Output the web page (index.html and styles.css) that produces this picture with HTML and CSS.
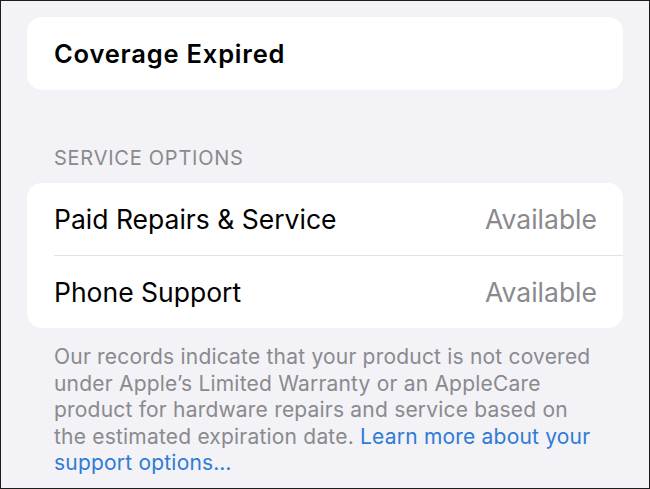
FILE: index.html
```html
<!DOCTYPE html>
<html>
<head>
<meta charset="utf-8">
<link rel="stylesheet" href="styles.css">
</head>
<body>
<div class="screen">
  <div class="card card-single">
    <div class="status">Coverage Expired</div>
  </div>
  <div class="section-header">SERVICE OPTIONS</div>
  <div class="card">
    <div class="row">
      <span class="label">Paid Repairs &amp; Service</span>
      <span class="value">Available</span>
    </div>
    <div class="row">
      <span class="label">Phone Support</span>
      <span class="value">Available</span>
    </div>
  </div>
  <p class="footer">Our records indicate that your product is not covered under Apple’s Limited Warranty or an AppleCare product for hardware repairs and service based on the estimated expiration date. <a class="link" href="#">Learn more about your support options…</a></p>
</div>
</body>
</html>
```
FILE: styles.css
```css
html, body {
  margin: 0;
  padding: 0;
}
body {
  width: 650px;
  height: 489px;
  overflow: hidden;
  font-family: Inter, "Liberation Sans", sans-serif;
}
.screen {
  box-sizing: border-box;
  width: 650px;
  height: 489px;
  background: #f2f2f7;
  border: 1px solid #1c1c1c;
  padding: 16px 26px 0 26px;
}
.card {
  background: #ffffff;
  border-radius: 15px;
}
.card-single {
  height: 73px;
  display: flex;
  align-items: center;
  padding-left: 27px;
}
.status {
  font-size: 25.5px;
  font-weight: 600;
  color: #000;
  letter-spacing: 0.8px;
}
.section-header {
  margin: 56px 0 0 27px;
  height: 37px;
  line-height: 24px;
  font-size: 20px;
  color: #8a8a8e;
  letter-spacing: 0.75px;
}
.row {
  height: 72px;
  margin-left: 27px;
  padding-right: 26px;
  display: flex;
  align-items: center;
  justify-content: space-between;
  font-size: 26.5px;
}
.row + .row {
  border-top: 1px solid #e3e3e6;
  height: 72px;
}
.label { color: #000; }
.value { color: #8a8a8e; }
.footer {
  margin: 16px 0 0 27px;
  padding-right: 28px;
  font-size: 21px;
  line-height: 26.5px;
  color: #8a8a8e;
  letter-spacing: 0.2px;
}
.link {
  color: #2f7bd6;
  text-decoration: none;
}
```
